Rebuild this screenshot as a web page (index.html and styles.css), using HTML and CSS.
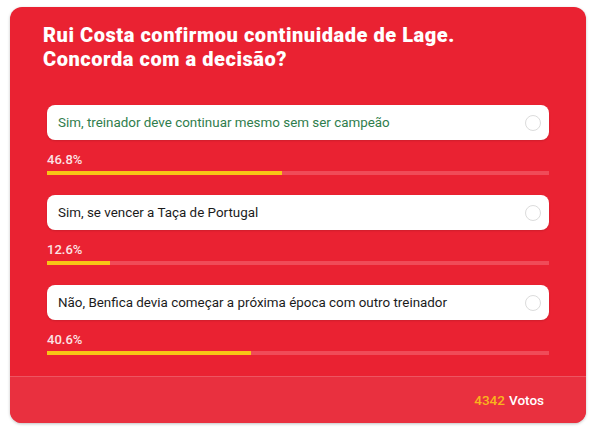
FILE: index.html
```html
<!DOCTYPE html>
<html lang="pt">
<head>
  <meta charset="UTF-8" />
  <meta name="viewport" content="width=device-width, initial-scale=1.0"/>
  <title>Sondagem</title>
  <link rel="stylesheet" href="styles.css">
</head>
<body>
  <div class="poll">
    <h2 class="question">Rui Costa confirmou continuidade de Lage.<br>Concorda com a decisão?</h2>
    <div class="options">
      <div class="option voted">
        <div class="answer">
          <span>Sim, treinador deve continuar mesmo sem ser campeão</span>
          <span class="radio"></span>
        </div>
        <div class="percent">46.8%</div>
        <div class="bar"><div class="fill" style="width: 46.8%;"></div></div>
      </div>
      <div class="option">
        <div class="answer">
          <span>Sim, se vencer a Taça de Portugal</span>
          <span class="radio"></span>
        </div>
        <div class="percent">12.6%</div>
        <div class="bar"><div class="fill" style="width: 12.6%;"></div></div>
      </div>
      <div class="option">
        <div class="answer">
          <span>Não, Benfica devia começar a próxima época com outro treinador</span>
          <span class="radio"></span>
        </div>
        <div class="percent">40.6%</div>
        <div class="bar"><div class="fill" style="width: 40.6%;"></div></div>
      </div>
    </div>
    <div class="footer">
      <span class="count">4342</span> Votos
    </div>
  </div>
</body>
</html>
```

FILE: styles.css
```css
* { margin: 0; padding: 0; box-sizing: border-box; }
html, body { height: 100%; background-color: #fff; font-family: Roboto, "Liberation Sans", sans-serif; }
body {
  padding: 7px 9px 9px 10px;
}
.poll {
  width: 576px;
  height: 416px;
  background-color: #ea2232;
  border-radius: 12px;
  box-shadow: 0 1px 3px rgba(0,0,0,0.25);
  display: flex;
  flex-direction: column;
  overflow: hidden;
}
.question {
  padding: 16px 32px 0 33px;
  color: #fff;
  font-size: 20px;
  line-height: 24px;
  font-weight: 900;
  letter-spacing: 0.55px;
}
.options {
  padding: 34px 37px 0;
  display: flex;
  flex-direction: column;
  gap: 20px;
}
.answer {
  height: 35px;
  background: #fff;
  border-radius: 8px;
  display: flex;
  align-items: center;
  justify-content: space-between;
  padding: 0 8px 0 11px;
  font-size: 13.4px;
  color: #1b1b1b;
  box-shadow: 0 1px 2px rgba(0,0,0,0.12);
}
.option.voted .answer { color: #2f7d4c; }
.radio {
  width: 16px;
  height: 16px;
  border: 1px solid #dcdcdc;
  border-radius: 50%;
}
.percent {
  margin-top: 12px;
  font-size: 13px;
  line-height: 16px;
  font-weight: 500;
  color: #fbe3e5;
}
.bar {
  margin-top: 3px;
  height: 4px;
  background-color: #f04b58;
}
.fill {
  height: 100%;
  background-color: #f8c516;
}
.footer {
  margin-top: auto;
  height: 47px;
  border-top: 1px solid rgba(255,255,255,0.18);
  background-color: #e9303f;
  display: flex;
  align-items: center;
  justify-content: flex-end;
  gap: 4px;
  padding-right: 42px;
  font-size: 13.5px;
  font-weight: 500;
  color: #fff;
}
.count { color: #f9b41d; }
```
